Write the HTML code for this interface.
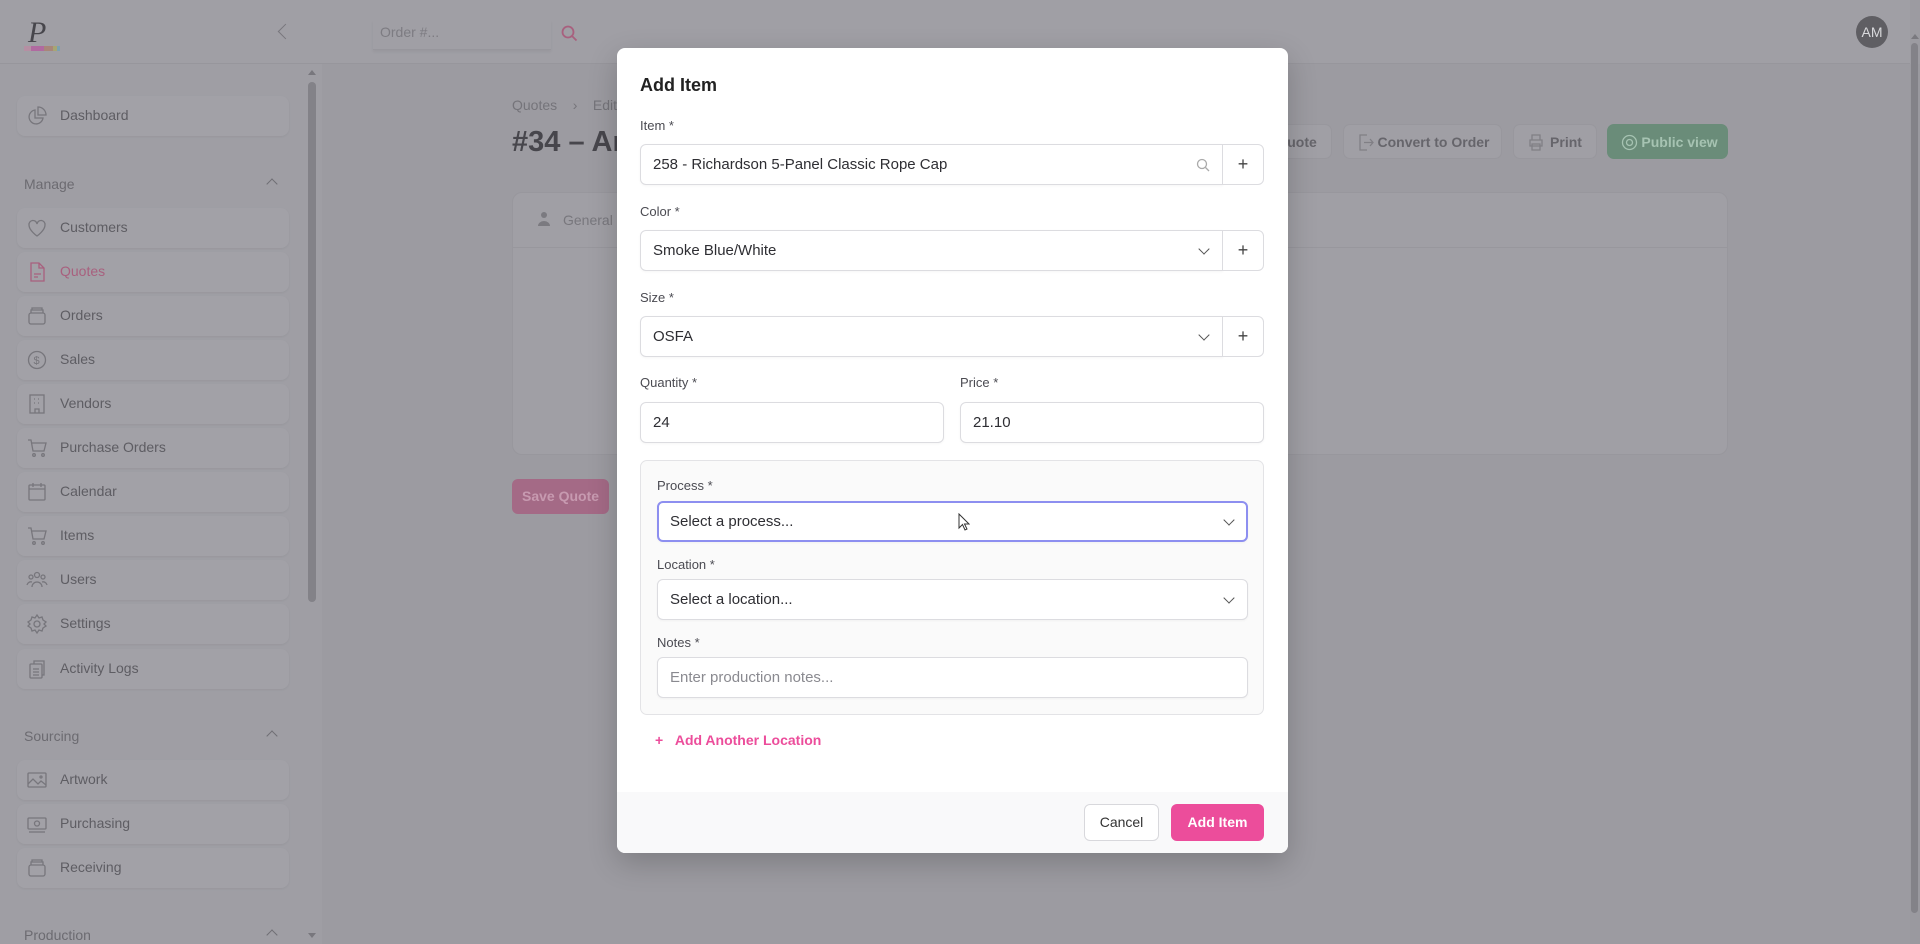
<!DOCTYPE html>
<html><head><meta charset="utf-8"><style>
*{box-sizing:border-box;margin:0;padding:0}
body{width:1920px;height:944px;overflow:hidden;background:#9c9ba1;font-family:"Liberation Sans",sans-serif;position:relative;color:#5a5960}
.abs{position:absolute}
.hdr{left:0;top:0;width:1910px;height:64px;background:#a09fa5;border-bottom:1px solid #97969c}
.side{left:0;top:64px;width:322px;height:880px;background:#9f9ea4}
.nav{position:absolute;left:17px;width:272px;height:40px;background:#a2a1a7;border-radius:8px;box-shadow:0 1px 2px rgba(0,0,0,.05)}
.nav span{position:absolute;left:43px;top:11px;font-size:14px;color:#5e5d63}
.nav svg{position:absolute;left:9px;top:9px}
.sec{position:absolute;left:24px;font-size:14px;color:#6c6b71}
.sec i{position:absolute;left:244px;top:4px;width:8px;height:8px;border-left:1.5px solid #6f6e74;border-top:1.5px solid #6f6e74;transform:rotate(45deg)}
.btn{position:absolute;top:124px;height:35px;border:1px solid #98979d;border-radius:7px;font-size:14px;color:#66656b;font-weight:bold;padding:9px 0 0 0;text-align:center;background:#a09fa5}
.modal{left:617px;top:48px;width:671px;height:805px;background:#fff;border-radius:8px;box-shadow:0 10px 30px rgba(0,0,0,.2);overflow:hidden}
.lbl{position:absolute;font-size:13px;color:#4b4b52}
.inp{position:absolute;height:41px;border:1px solid #dcdce0;border-radius:6px;background:#fff;font-size:15px;color:#2e2e33;padding:11px 0 0 12px;box-shadow:0 1px 2px rgba(0,0,0,.04)}
.plus{position:absolute;width:42px;height:41px;border:1px solid #dcdce0;border-radius:0 6px 6px 0;background:#fff;text-align:center;font-size:18px;color:#444;line-height:38px}
.chev{position:absolute;right:14px;top:14px;width:8px;height:8px;border-right:1.5px solid #555;border-bottom:1.5px solid #555;transform:rotate(45deg)}
</style></head><body>
<div class="abs hdr"></div>
<div class="abs" style="left:28px;top:16px;font-family:'Liberation Serif',serif;font-style:italic;font-size:30px;color:#47464c">P</div>
<div class="abs" style="left:24px;top:46px;width:36px;height:5px;background:linear-gradient(90deg,#b58fa3 0 20%,#b06aa0 20% 55%,#a8867a 55% 80%,#a7a573 80% 92%,#7ca1b0 92%)"></div>
<div class="abs" style="left:280px;top:26px;width:11px;height:11px;border-left:1.5px solid #78777d;border-bottom:1.5px solid #78777d;transform:rotate(45deg)"></div>
<div class="abs" style="left:373px;top:20px;width:178px;height:30px;border-bottom:1px solid #97969c;box-shadow:0 2px 3px rgba(0,0,0,.05)"></div>
<div class="abs" style="left:380px;top:24px;font-size:14px;color:#7d7c82">Order #...</div>
<svg class="abs" style="left:561px;top:25px" width="17" height="17" viewBox="0 0 17 17"><circle cx="7" cy="7" r="5.5" fill="none" stroke="#a8607e" stroke-width="1.8"/><path d="M11 11l4.5 4.5" stroke="#a8607e" stroke-width="1.8"/></svg>
<div class="abs" style="left:1856px;top:16px;width:32px;height:32px;border-radius:50%;background:#5f5e63;color:#d9d9dc;font-size:14px;text-align:center;line-height:32px">AM</div>
<div class="abs" style="left:1910px;top:64px;width:10px;height:880px;background:#9a999f"></div>
<div class="abs" style="left:1911px;top:34px;width:0;height:0;border-left:4px solid transparent;border-right:4px solid transparent;border-bottom:5px solid #7a797f"></div>
<div class="abs" style="left:1911px;top:43px;width:7px;height:870px;background:#838288;border-radius:4px"></div>

<div class="abs side"></div>
<div class="abs" style="left:308px;top:70px;width:0;height:0;border-left:4px solid transparent;border-right:4px solid transparent;border-bottom:5px solid #78777d"></div>
<div class="abs" style="left:308px;top:82px;width:8px;height:520px;background:#838288;border-radius:4px"></div>
<div class="abs" style="left:308px;top:933px;width:0;height:0;border-left:4px solid transparent;border-right:4px solid transparent;border-top:5px solid #78777d"></div>

<div class="nav" style="top:96px"><svg width="22" height="22" viewBox="0 0 22 22" fill="none" stroke="#77767c" stroke-width="1.3"><path d="M9 5a7 7 0 1 0 8 8H9z"/><path d="M12 2v8h8a8 8 0 0 0-8-8z"/></svg><span>Dashboard</span></div>
<div class="sec" style="top:176px">Manage<i></i></div>
<div class="nav" style="top:208px"><svg width="22" height="22" viewBox="0 0 22 22" fill="none" stroke="#77767c" stroke-width="1.3"><path d="M11 19S3 13.5 3 8a4 4 0 0 1 8-1 4 4 0 0 1 8 1c0 5.5-8 11-8 11z"/></svg><span>Customers</span></div>
<div class="nav" style="top:252px"><svg width="22" height="22" viewBox="0 0 22 22" fill="none" stroke="#a8607e" stroke-width="1.3"><path d="M5 2h8l5 5v13H5z"/><path d="M13 2v5h5M8 13h7M8 16h4"/></svg><span style="color:#a8607e">Quotes</span></div>
<div class="nav" style="top:296px"><svg width="22" height="22" viewBox="0 0 22 22" fill="none" stroke="#77767c" stroke-width="1.3"><rect x="3" y="8" width="16" height="11" rx="2"/><path d="M5 8V5h12v3M6 5V3h10v2"/></svg><span>Orders</span></div>
<div class="nav" style="top:340px"><svg width="22" height="22" viewBox="0 0 22 22" fill="none" stroke="#77767c" stroke-width="1.3"><circle cx="11" cy="11" r="8.5"/><text x="7.5" y="15" font-size="11" fill="#77767c" stroke="none" font-family="Liberation Sans">$</text></svg><span>Sales</span></div>
<div class="nav" style="top:384px"><svg width="22" height="22" viewBox="0 0 22 22" fill="none" stroke="#77767c" stroke-width="1.3"><rect x="4" y="2" width="14" height="18"/><path d="M8 6h1M12 6h1M8 10h1M12 10h1M9 20v-4h4v4"/></svg><span>Vendors</span></div>
<div class="nav" style="top:428px"><svg width="22" height="22" viewBox="0 0 22 22" fill="none" stroke="#77767c" stroke-width="1.3"><path d="M2 3h3l2 11h11l2-8H6"/><circle cx="8" cy="18" r="1.3"/><circle cx="17" cy="18" r="1.3"/></svg><span>Purchase Orders</span></div>
<div class="nav" style="top:472px"><svg width="22" height="22" viewBox="0 0 22 22" fill="none" stroke="#77767c" stroke-width="1.3"><rect x="3" y="4" width="16" height="15" rx="1"/><path d="M3 8h16M7 2v4M15 2v4"/></svg><span>Calendar</span></div>
<div class="nav" style="top:516px"><svg width="22" height="22" viewBox="0 0 22 22" fill="none" stroke="#77767c" stroke-width="1.3"><path d="M2 3h3l2 11h11l2-8H6"/><circle cx="8" cy="18" r="1.3"/><circle cx="17" cy="18" r="1.3"/></svg><span>Items</span></div>
<div class="nav" style="top:560px"><svg width="22" height="22" viewBox="0 0 22 22" fill="none" stroke="#77767c" stroke-width="1.3"><circle cx="11" cy="6" r="2.5"/><circle cx="5" cy="8" r="2"/><circle cx="17" cy="8" r="2"/><path d="M6 18a5 5 0 0 1 10 0M1 16a4 4 0 0 1 5-3M21 16a4 4 0 0 0-5-3"/></svg><span>Users</span></div>
<div class="nav" style="top:604px"><svg width="22" height="22" viewBox="0 0 22 22" fill="none" stroke="#77767c" stroke-width="1.3"><circle cx="11" cy="11" r="3"/><path d="M11 2l2 3 3-1 1 3 3 2-2 2 2 2-3 2-1 3-3-1-2 3-2-3-3 1-1-3-3-2 2-2-2-2 3-2 1-3 3 1z"/></svg><span>Settings</span></div>
<div class="nav" style="top:649px"><svg width="22" height="22" viewBox="0 0 22 22" fill="none" stroke="#77767c" stroke-width="1.3"><rect x="4" y="6" width="12" height="14" rx="1"/><path d="M8 6V3h10v14h-2M7 11h6M7 14h6M7 17h6"/></svg><span>Activity Logs</span></div>
<div class="sec" style="top:728px">Sourcing<i></i></div>
<div class="nav" style="top:760px"><svg width="22" height="22" viewBox="0 0 22 22" fill="none" stroke="#77767c" stroke-width="1.3"><rect x="2" y="4" width="18" height="14" rx="1"/><path d="M2 15l5-5 5 5 3-3 5 4"/><circle cx="15" cy="8" r="1"/></svg><span>Artwork</span></div>
<div class="nav" style="top:804px"><svg width="22" height="22" viewBox="0 0 22 22" fill="none" stroke="#77767c" stroke-width="1.3"><rect x="2" y="5" width="18" height="11" rx="1"/><circle cx="11" cy="10.5" r="2.5"/><path d="M3 19h16"/></svg><span>Purchasing</span></div>
<div class="nav" style="top:848px"><svg width="22" height="22" viewBox="0 0 22 22" fill="none" stroke="#77767c" stroke-width="1.3"><rect x="3" y="8" width="16" height="11" rx="2"/><path d="M5 8V5h12v3M6 5V3h10v2"/></svg><span>Receiving</span></div>
<div class="sec" style="top:927px">Production<i></i></div>

<div class="abs" style="left:512px;top:97px;font-size:14px;color:#75747a">Quotes&nbsp;&nbsp;&nbsp;&nbsp;›&nbsp;&nbsp;&nbsp;&nbsp;Edit</div>
<div class="abs" style="left:512px;top:126px;font-size:29px;font-weight:bold;color:#47464c">#34 – An</div>
<div class="btn" style="left:1230px;width:102px">&nbsp;&nbsp;&nbsp;&nbsp;&nbsp;&nbsp;&nbsp;&nbsp;Quote</div>
<div class="btn" style="left:1343px;width:159px;padding-left:22px">Convert to Order<svg class="abs" style="left:14px;top:9px" width="16" height="17" viewBox="0 0 16 17" fill="none" stroke="#807f85" stroke-width="1.3"><path d="M9 1H2v15h7M6 8.5h9M12 5l3 3.5-3 3.5"/></svg></div>
<div class="btn" style="left:1513px;width:84px;padding-left:22px">Print<svg class="abs" style="left:14px;top:9px" width="16" height="17" viewBox="0 0 16 17" fill="none" stroke="#807f85" stroke-width="1.3"><path d="M4 6V1h8v5M2 6h12v6H2zM4 10h8v6H4z"/></svg></div>
<div class="btn" style="left:1607px;width:121px;background:#6a8c79;border-color:#6a8c79;color:#a6c3b2;padding-left:24px">Public view<svg class="abs" style="left:13px;top:9px" width="17" height="17" viewBox="0 0 17 17" fill="none" stroke="#a6c3b2" stroke-width="1.3"><circle cx="8.5" cy="8.5" r="7"/><circle cx="8.5" cy="8.5" r="3"/></svg></div>
<div class="abs" style="left:512px;top:192px;width:1216px;height:263px;background:#a09fa5;border:1px solid #98979d;border-radius:10px"></div>
<div class="abs" style="left:513px;top:247px;width:1214px;height:1px;background:#98979d"></div>
<svg class="abs" style="left:538px;top:211px" width="12" height="16" viewBox="0 0 12 16" fill="#7b7a80"><circle cx="6" cy="4" r="3"/><path d="M0 15a6 5 0 0 1 12 0z"/></svg>
<div class="abs" style="left:563px;top:212px;font-size:14px;color:#78777d">General</div>
<div class="abs" style="left:512px;top:479px;width:97px;height:35px;background:#a46a86;border-radius:6px;color:#c79ab0;font-size:14px;font-weight:bold;text-align:center;line-height:35px">Save Quote</div>

<div class="abs modal">
<div class="abs" style="left:23px;top:27px;font-size:18px;font-weight:bold;color:#222">Add Item</div>
<div class="lbl" style="left:23px;top:70px">Item *</div>
<div class="inp" style="left:23px;top:96px;width:583px;border-radius:6px 0 0 6px">258 - Richardson 5-Panel Classic Rope Cap<svg class="abs" style="right:12px;top:13px" width="14" height="14" viewBox="0 0 14 14" fill="none" stroke="#aaa" stroke-width="1.3"><circle cx="6" cy="6" r="4.5"/><path d="M9.5 9.5l3.5 3.5"/></svg></div>
<div class="plus" style="left:605px;top:96px">+</div>
<div class="lbl" style="left:23px;top:156px">Color *</div>
<div class="inp" style="left:23px;top:182px;width:583px;border-radius:6px 0 0 6px">Smoke Blue/White<i class="chev"></i></div>
<div class="plus" style="left:605px;top:182px">+</div>
<div class="lbl" style="left:23px;top:242px">Size *</div>
<div class="inp" style="left:23px;top:268px;width:583px;border-radius:6px 0 0 6px">OSFA<i class="chev"></i></div>
<div class="plus" style="left:605px;top:268px">+</div>
<div class="lbl" style="left:23px;top:327px">Quantity *</div>
<div class="lbl" style="left:343px;top:327px">Price *</div>
<div class="inp" style="left:23px;top:354px;width:304px">24</div>
<div class="inp" style="left:343px;top:354px;width:304px">21.10</div>
<div class="abs" style="left:23px;top:412px;width:624px;height:255px;background:#fafafa;border:1px solid #e3e3e6;border-radius:7px"></div>
<div class="lbl" style="left:40px;top:430px">Process *</div>
<div class="inp" style="left:40px;top:453px;width:591px;border:2px solid #8d8ff0;padding-left:11px;padding-top:10px">Select a process...<i class="chev" style="right:13px;top:13px"></i></div>
<svg class="abs" style="left:341px;top:465px" width="12" height="18" viewBox="0 0 12 18"><path d="M1 1v14l3.5-3.5 2.5 5.5 2-1-2.5-5H11z" fill="#fff" stroke="#333" stroke-width="1"/></svg>
<div class="lbl" style="left:40px;top:509px">Location *</div>
<div class="inp" style="left:40px;top:531px;width:591px">Select a location...<i class="chev"></i></div>
<div class="lbl" style="left:40px;top:587px">Notes *</div>
<div class="inp" style="left:40px;top:609px;width:591px;color:#8a8a90">Enter production notes...</div>
<div class="abs" style="left:38px;top:684px;font-size:14px;font-weight:bold;color:#ec4d9b">+&nbsp;&nbsp;&nbsp;Add Another Location</div>
<div class="abs" style="left:0;top:744px;width:671px;height:61px;background:#f9f9fa"></div>
<div class="abs" style="left:467px;top:756px;width:75px;height:37px;background:#fff;border:1px solid #d8d8dc;border-radius:6px;font-size:14px;color:#333;text-align:center;line-height:35px">Cancel</div>
<div class="abs" style="left:554px;top:756px;width:93px;height:37px;background:#ec4d9b;border-radius:6px;font-size:14px;font-weight:bold;color:#fff;text-align:center;line-height:37px">Add Item</div>
</div>
</body></html>
